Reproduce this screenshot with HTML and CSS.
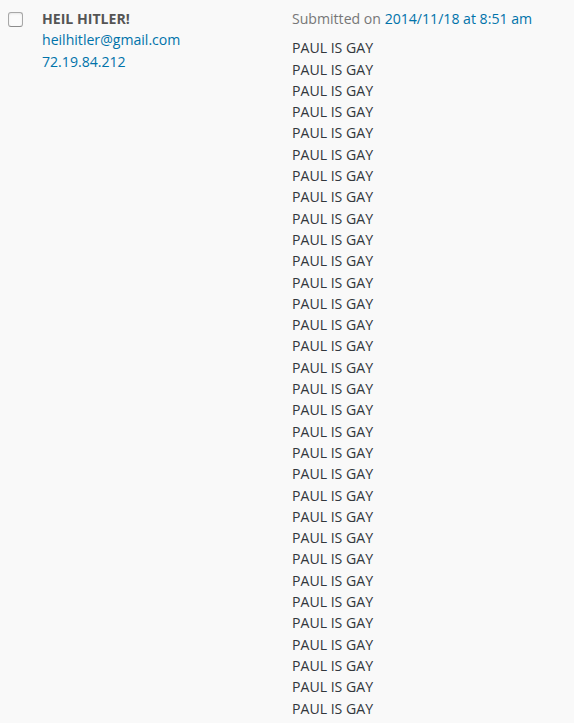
FILE: index.html
```html
<!DOCTYPE html>
<html>
<head>
<meta charset="utf-8">
<link rel="stylesheet" href="styles.css">
</head>
<body>
<div class="row">
  <div class="check-col"><span class="checkbox"></span></div>
  <div class="author-col">
    <div class="author-name">HEIL HITLER!</div>
    <a class="link" href="#">heilhitler@gmail.com</a>
    <a class="link" href="#">72.19.84.212</a>
  </div>
  <div class="comment-col">
    <div class="submitted">Submitted on <a class="link" href="#">2014/11/18 at 8:51 am</a></div>
    <div class="comment-text">
      <div>PAUL IS GAY</div><div>PAUL IS GAY</div><div>PAUL IS GAY</div><div>PAUL IS GAY</div>
      <div>PAUL IS GAY</div><div>PAUL IS GAY</div><div>PAUL IS GAY</div><div>PAUL IS GAY</div>
      <div>PAUL IS GAY</div><div>PAUL IS GAY</div><div>PAUL IS GAY</div><div>PAUL IS GAY</div>
      <div>PAUL IS GAY</div><div>PAUL IS GAY</div><div>PAUL IS GAY</div><div>PAUL IS GAY</div>
      <div>PAUL IS GAY</div><div>PAUL IS GAY</div><div>PAUL IS GAY</div><div>PAUL IS GAY</div>
      <div>PAUL IS GAY</div><div>PAUL IS GAY</div><div>PAUL IS GAY</div><div>PAUL IS GAY</div>
      <div>PAUL IS GAY</div><div>PAUL IS GAY</div><div>PAUL IS GAY</div><div>PAUL IS GAY</div>
      <div>PAUL IS GAY</div><div>PAUL IS GAY</div><div>PAUL IS GAY</div><div>PAUL IS GAY</div>
    </div>
  </div>
</div>
</body>
</html>
```
FILE: styles.css
```css
html, body {
  margin: 0;
  padding: 0;
  background: #f9f9f9;
}
body {
  font-family: "Open Sans", "Liberation Sans", sans-serif;
  font-size: 14.1px;
  line-height: 21.3px;
  color: #32373c;
  overflow: hidden;
}
.row {
  display: grid;
  grid-template-columns: 42px 250px 1fr;
  padding-top: 8px;
}
.check-col {
  padding-left: 8px;
  padding-top: 4px;
}
.checkbox {
  display: block;
  width: 13px;
  height: 13px;
  border: 1px solid #a8a8a8;
  border-bottom-color: #8c8c8c;
  border-radius: 3px;
  background: #fbfbfb;
  box-shadow: inset 0 1px 2px rgba(0,0,0,0.08);
}
.author-col {
  display: flex;
  flex-direction: column;
  align-items: flex-start;
}
.author-name {
  font-weight: 700;
  color: #555;
}
.link {
  color: #0073aa;
  text-decoration: none;
}
.submitted {
  color: #777;
  margin-bottom: 8px;
}
.comment-text {
  color: #32373c;
}
```
